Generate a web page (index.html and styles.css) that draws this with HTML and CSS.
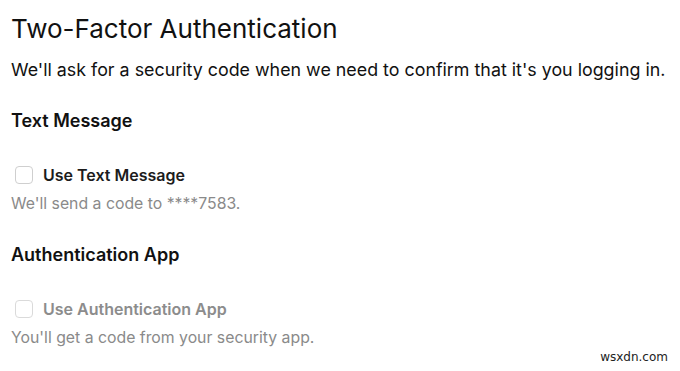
FILE: index.html
```html
<!DOCTYPE html>
<html>
<head>
<meta charset="utf-8">
<link rel="stylesheet" href="styles.css">
</head>
<body>
<main class="page">
  <h1 class="title">Two-Factor Authentication</h1>
  <p class="lead">We'll ask for a security code when we need to confirm that it's you logging in.</p>

  <section class="method">
    <h2 class="method-title">Text Message</h2>
    <label class="option">
      <span class="box"></span>
      <span class="option-label">Use Text Message</span>
    </label>
    <p class="hint">We'll send a code to ****7583.</p>
  </section>

  <section class="method">
    <h2 class="method-title">Authentication App</h2>
    <label class="option disabled">
      <span class="box"></span>
      <span class="option-label">Use Authentication App</span>
    </label>
    <p class="hint">You'll get a code from your security app.</p>
  </section>
</main>
<div class="watermark">wsxdn.com</div>
</body>
</html>
```

FILE: styles.css
```css
html, body {
  margin: 0;
  padding: 0;
  background: #ffffff;
}
body {
  font-family: Inter, "Liberation Sans", Arial, sans-serif;
  color: #1c1c1c;
  width: 680px;
  height: 371px;
  overflow: hidden;
  position: relative;
}
.page {
  padding: 12px 0 0 11px;
  display: flex;
  flex-direction: column;
}
.title {
  margin: 0;
  font-size: 26px;
  font-weight: 400;
  line-height: 34px;
  color: #111;
}
.lead {
  margin: 13px 0 0 0;
  font-size: 17.85px;
  line-height: 22px;
  color: #111;
}
.method {
  display: flex;
  flex-direction: column;
}
.method-title {
  margin: 0;
  font-size: 18px;
  font-weight: 600;
  line-height: 22px;
  color: #111;
}
.method:first-of-type .method-title {
  margin-top: 29px;
}
.method + .method .method-title {
  margin-top: 30px;
}
.option {
  display: flex;
  align-items: center;
  gap: 10px;
  margin: 33px 0 0 4px;
}
.box {
  width: 16px;
  height: 16px;
  border: 1px solid #cfcfcf;
  border-radius: 4px;
  background: #fff;
}
.option-label {
  font-size: 16px;
  font-weight: 600;
  color: #1c1c1c;
  line-height: 20px;
}
.option.disabled .option-label {
  color: #8c8c8c;
}
.option.disabled .box {
  border-color: #dadada;
}
.hint {
  margin: 9px 0 0 0;
  font-size: 15.8px;
  line-height: 20px;
  color: #8a8a8a;
}
.watermark {
  position: absolute;
  right: 12px;
  bottom: 7px;
  font-size: 12px;
  color: #222;
  font-family: "DejaVu Sans", sans-serif;
}
```
